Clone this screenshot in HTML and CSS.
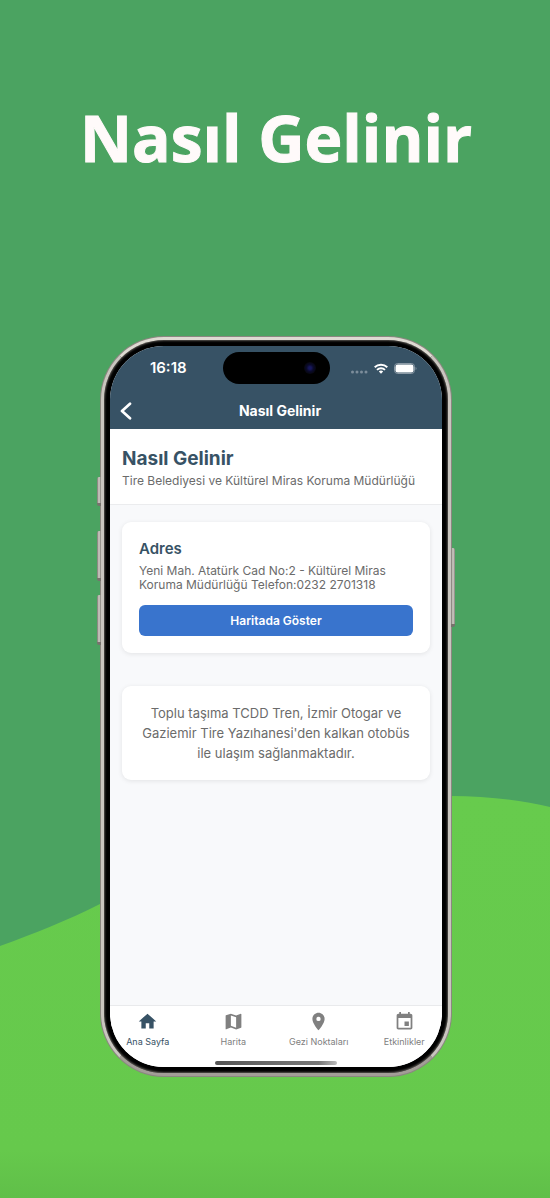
FILE: index.html
```html
<!DOCTYPE html>
<html lang="tr">
<head>
<meta charset="utf-8">
<meta name="viewport" content="width=device-width, initial-scale=1">
<title>Nasıl Gelinir</title>
<link rel="stylesheet" href="styles.css">
</head>
<body>
<main class="poster">
  <svg class="hill" viewBox="0 0 550 402" preserveAspectRatio="none" aria-hidden="true">
    <defs>
      <linearGradient id="grass" x1="0" y1="0" x2="0" y2="1">
        <stop offset="0" stop-color="#67cb4d"/>
        <stop offset=".88" stop-color="#66c94c"/>
        <stop offset="1" stop-color="#60bf49"/>
      </linearGradient>
    </defs>
    <path fill="url(#grass)" d="M0 150C36 137 66 125 100 108C220 48 300 0 450 0C486 0 520 4 550 11V402H0Z"/>
  </svg>
  <h1 class="headline">Nasıl Gelinir</h1>
  <div class="phone">
    <i class="key key-action"></i>
    <i class="key key-up"></i>
    <i class="key key-down"></i>
    <i class="key key-power"></i>
    <div class="bezel">
      <div class="screen">
        <header class="top">
          <div class="status">
            <span class="time">16:18</span>
            <span class="island"><i class="lens"></i></span>
            <span class="signals">
              <svg class="cell" width="18" height="4" viewBox="0 0 18 4" fill="#7c8d9b" aria-hidden="true"><circle cx="2.500" cy="2" r="1.500"/><circle cx="7" cy="2" r="1.500"/><circle cx="11.500" cy="2" r="1.500"/><circle cx="16" cy="2" r="1.500"/></svg>
              <svg width="14" height="11" viewBox="0 0 14 11" fill="none" stroke="#fff" stroke-width="1.9" aria-hidden="true"><path d="M.7 4.300a9 9 0 0 1 12.600 0M3 6.900a5.700 5.700 0 0 1 8 0"/><path fill="#fff" stroke="none" d="M4.800 8.600a3.200 3.200 0 0 1 4.400 0L7 10.800Z"/></svg>
              <svg width="23" height="11" viewBox="0 0 23 11" aria-hidden="true"><rect x=".5" y=".5" width="20" height="10" rx="3.200" fill="none" stroke="#8b9aa6"/><rect x="1.500" y="1.500" width="18" height="8" rx="2.200" fill="#fff"/><path d="M21.600 4v3c1.200-.5 1.200-2.500 0-3Z" fill="#8b9aa6"/></svg>
            </span>
          </div>
          <div class="navbar">
            <button class="back" type="button" aria-label="Geri"><svg width="12" height="18" viewBox="0 0 12 18" fill="none" stroke="#fff" stroke-width="2.700" stroke-linecap="round" stroke-linejoin="round"><path d="M10 1.700 2 9l8 7.300"/></svg></button>
            <span class="nav-title">Nasıl Gelinir</span>
          </div>
        </header>
        <section class="intro">
          <h2 class="intro-title">Nasıl Gelinir</h2>
          <p class="intro-text">Tire Belediyesi ve Kültürel Miras Koruma Müdürlüğü</p>
        </section>
        <div class="content">
          <section class="card address">
            <h3 class="card-title">Adres</h3>
            <p class="card-text">Yeni Mah. Atatürk Cad No:2 - Kültürel Miras Koruma Müdürlüğü Telefon:0232 2701318</p>
            <button class="map-button" type="button">Haritada Göster</button>
          </section>
          <section class="card transit">
            <p class="transit-text">Toplu taşıma TCDD Tren, İzmir Otogar ve Gaziemir Tire Yazıhanesi'den kalkan otobüs ile ulaşım sağlanmaktadır.</p>
          </section>
        </div>
        <footer class="bottom">
          <nav class="tabs">
            <a class="tab active" href="#ana"><svg class="icon" viewBox="0 0 24 24"><path d="M10 20v-6h4v6h5v-8h3L12 3 2 12h3v8z"/></svg>Ana Sayfa</a>
            <a class="tab" href="#harita"><svg class="icon" viewBox="0 0 24 24"><path d="M20.500 3l-.16.03L15 5.100 9 3 3.360 4.900c-.21.07-.36.25-.36.48V20.500c0 .28.22.5.5.5l.16-.03L9 18.900l6 2.100 5.640-1.900c.21-.07.36-.25.36-.48V3.500c0-.28-.22-.5-.5-.5zM15 19l-6-2.110V5l6 2.110V19z"/></svg>Harita</a>
            <a class="tab" href="#gezi"><svg class="icon" viewBox="0 0 24 24"><path d="M12 2C8.130 2 5 5.130 5 9c0 5.250 7 13 7 13s7-7.750 7-13c0-3.870-3.130-7-7-7zm0 9.500a2.500 2.500 0 0 1 0-5 2.500 2.500 0 0 1 0 5z"/></svg>Gezi Noktaları</a>
            <a class="tab" href="#etkinlik"><svg class="icon" viewBox="0 0 24 24"><path d="M17 12h-5v5h5v-5zM16 1v2H8V1H6v2H5c-1.110 0-1.990.9-1.990 2L3 19c0 1.100.89 2 2 2h14c1.100 0 2-.9 2-2V5c0-1.100-.9-2-2-2h-1V1h-2zm3 18H5V8h14v11z"/></svg>Etkinlikler</a>
          </nav>
          <div class="home-bar"></div>
        </footer>
      </div>
    </div>
  </div>
</main>
</body>
</html>
```
FILE: styles.css
```css
* { box-sizing: border-box; }

body {
  margin: 0;
  background: #4ba361;
  font-family: Inter, "Noto Sans", sans-serif;
}

h1, h2, h3, p { margin: 0; }

button { border: 0; padding: 0; font: inherit; cursor: pointer; }

.poster {
  position: relative;
  min-height: 100vh;
  display: flex;
  flex-direction: column;
  align-items: center;
  gap: 152px;
  padding: 92px 0 120px 2px;
}

.hill {
  position: absolute;
  left: 0;
  bottom: 0;
  width: 100%;
  height: 402px;
}

.headline {
  position: relative;
  color: #fffafa;
  font: 700 64px/92px "Open Sans", "Noto Sans", sans-serif;
  -webkit-text-stroke: 1px #fffafa;
  white-space: nowrap;
}

/* Device frame */
.phone {
  position: relative;
  width: 64%;
  min-width: 352px;
  max-width: 440px;
  aspect-ratio: 352 / 741;
  padding: 1px;
  border-radius: 64px;
  background: #8b8780;
}

.bezel {
  position: relative;
  height: 100%;
  padding: 6px;
  border: 3px solid #c9c5bf;
  border-top-color: #dedad2;
  border-bottom-color: #a29d97;
  border-radius: 63px;
  background: #000;
  box-shadow: inset 0 0 2px 1px #55524e;
}

.screen {
  height: 100%;
  display: flex;
  flex-direction: column;
  overflow: hidden;
  border-radius: 54px;
  background: #f8f9fb;
}

.key {
  position: absolute;
  left: -3px;
  width: 4px;
  border-radius: 2px 0 0 2px;
  border-bottom: 3px solid #77736d;
  background: linear-gradient(90deg, #77736d, #d5d1ca 50%, #85817b);
}

.key-action { top: 19%; height: 4%; }
.key-up { top: 26.300%; height: 6.700%; }
.key-down { top: 35%; height: 6.700%; }
.key-power {
  top: 28.600%;
  height: 10.700%;
  left: auto;
  right: -3px;
  border-radius: 0 2px 2px 0;
}

/* Status and navigation bars */
.top { background: #375265; color: #fff; }

.status {
  display: grid;
  grid-template-columns: 1fr 107px 1fr;
  align-items: center;
  justify-items: center;
  padding: 6px 0 8px;
}

.time { font-size: 15px; line-height: 20px; font-weight: 600; padding-left: 4px; }

.island {
  width: 107px;
  height: 32px;
  display: flex;
  align-items: center;
  justify-content: flex-end;
  padding-right: 14px;
  border-radius: 16px;
  background: #000;
}

.lens {
  width: 12px;
  height: 12px;
  border-radius: 50%;
  background: radial-gradient(circle, #17175c 0 15%, #0a0a2c 40%, #07070f 70%);
}

.signals { display: flex; align-items: center; gap: 6px; padding-right: 4px; }
.cell { align-self: flex-end; }

.navbar {
  display: grid;
  grid-template-columns: 40px 1fr 32px;
  align-items: center;
  height: 37px;
}

.back {
  display: flex;
  justify-content: flex-start;
  padding: 4px 10px;
  background: none;
}

.nav-title { text-align: center; font-size: 14px; line-height: 20px; font-weight: 700; }

/* Page heading */
.intro {
  padding: 17px 12px 14px;
  border-bottom: 1px solid #ebecee;
  background: #fff;
}

.intro-title { color: #375265; font-size: 19px; line-height: 26px; font-weight: 700; }
.intro-text { color: #6b6b6b; font-size: 12px; line-height: 18px; }

/* Cards */
.content {
  flex: 1;
  display: flex;
  flex-direction: column;
  gap: 33px;
  padding: 17px 12px;
}

.card {
  border-radius: 9px;
  background: #fff;
  box-shadow: 0 1px 5px rgba(0, 0, 0, .09);
}

.address { padding: 18px 17px 17px; }
.card-title { color: #375265; font-size: 15px; line-height: 18px; font-weight: 600; }
.card-text { margin: 6px 0 13px; color: #6b6b6b; font-size: 12px; line-height: 14px; }

.map-button {
  width: 100%;
  height: 31px;
  border-radius: 6px;
  background: #3974cd;
  color: #fff;
  font-size: 12px;
  font-weight: 600;
}

.transit { padding: 17px; }
.transit-text { color: #6b6b6b; font-size: 13px; line-height: 20px; text-align: center; }

/* Tab bar */
.bottom {
  border-top: 1px solid #e9eaec;
  background: #fff;
}

.tabs {
  display: grid;
  grid-template-columns: repeat(4, 1fr);
  margin: 0 -5px;
  padding-top: 5px;
}

.tab {
  display: flex;
  flex-direction: column;
  align-items: center;
  gap: 5px;
  color: #808080;
  font-size: 9px;
  line-height: 10px;
  text-decoration: none;
  white-space: nowrap;
}

.active { color: #375265; }

.icon { width: 21px; height: 21px; fill: currentColor; }

.home-bar {
  width: 122px;
  height: 4px;
  margin: 14px auto 2px;
  border-radius: 2px;
  background: linear-gradient(90deg, #555, #707070 60%, #777 85%, #bbb);
}
```
